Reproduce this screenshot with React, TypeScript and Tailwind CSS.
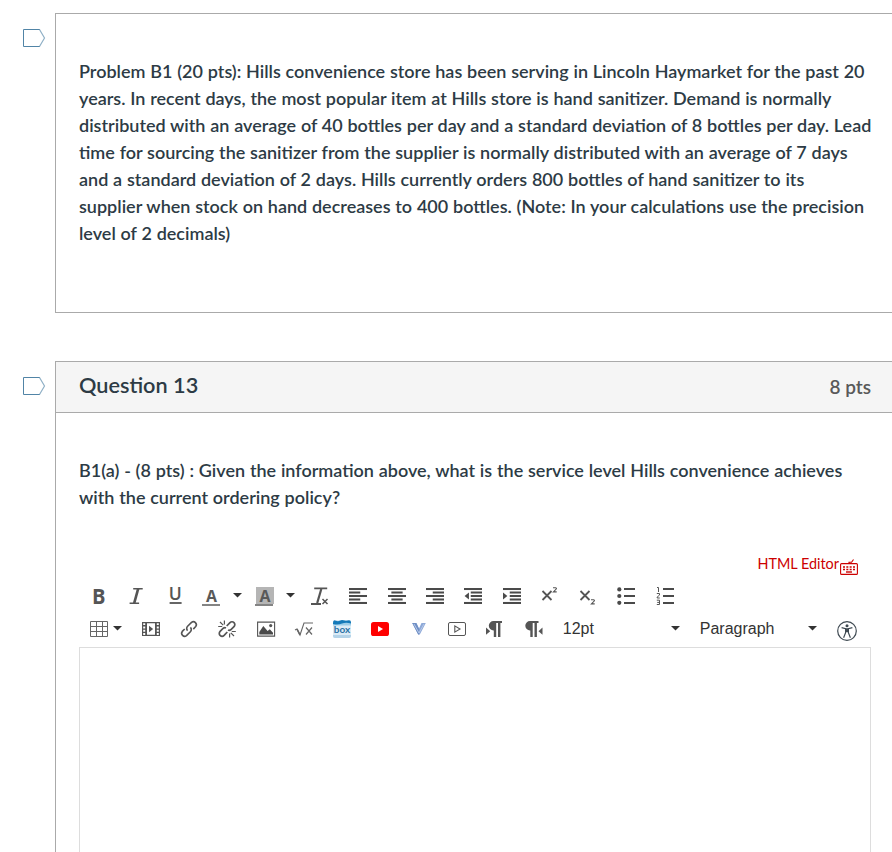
import React from "react";

type IconProps = {
  children: React.ReactNode;
  box?: string;
  className?: string;
};

const Icon = ({ children, box = "0 0 18 18", className = "" }: IconProps) => (
  <svg
    viewBox={box}
    width="18"
    height="18"
    fill="none"
    className={`shrink-0 overflow-visible ${className}`}
  >
    {children}
  </svg>
);

const Cell = ({ children }: { children: React.ReactNode }) => (
  <div className="flex h-[33px] w-[38.3px] shrink-0 items-center justify-center">
    {children}
  </div>
);

const Caret = () => (
  <svg width="9" height="5" viewBox="0 0 9 5" className="shrink-0">
    <path d="M0 0h9L4.5 4.5z" fill="#333" />
  </svg>
);

const Flag = () => (
  <svg width="23" height="19" viewBox="0 0 23 19" fill="none">
    <path d="M17 .5H.5v17H17" stroke="#5184a6" />
    <path d="M16.5 .5l5 8.5-5 8.5" stroke="#8fb0c6" strokeWidth="1.2" />
  </svg>
);

const lines = (widths: number[][]) =>
  widths.map(([x, w], i) => (
    <rect key={i} x={x} y={0.9 + i * 3.1} width={w} height="1.8" fill="#4a4a4a" />
  ));

const aligns = [
  [[0, 16], [0, 10], [0, 16], [0, 10], [0, 16]],
  [[0, 16], [3, 10], [0, 16], [3, 10], [0, 16]],
  [[0, 16], [6, 10], [0, 16], [6, 10], [0, 16]],
  [[0, 16], [6, 10], [6, 10], [6, 10], [0, 16]],
  [[0, 16], [6, 10], [6, 10], [6, 10], [0, 16]],
];

const RowOne = () => (
  <div className="flex h-[33px] items-center">
    <Cell>
      <Icon>
        <text x="3" y="16.6" fontSize="22" fontWeight="700" fontFamily="Open Sans, sans-serif" fill="#555" textLength="13.5" lengthAdjust="spacingAndGlyphs">B</text>
      </Icon>
    </Cell>
    <Cell>
      <Icon>
        <path d="M6.2 1.7h9.5M2.6 16.2h9.5" stroke="#555" strokeWidth="1.4" />
        <path d="M11.2 1.7L7.2 16.2" stroke="#555" strokeWidth="2.6" />
      </Icon>
    </Cell>
    <Cell>
      <Icon>
        <text x="2.8" y="13.2" fontSize="17.5" fontWeight="600" fontFamily="Open Sans, sans-serif" fill="#555">U</text>
        <path d="M3.6 16h12" stroke="#555" strokeWidth="1.8" />
      </Icon>
    </Cell>
    <div className="flex w-[34px] shrink-0 items-center justify-center">
      <Icon>
        <text x="4" y="15" fontSize="15.5" fontWeight="700" fontFamily="Open Sans, sans-serif" fill="#595959" textLength="11" lengthAdjust="spacingAndGlyphs">A</text>
        <path d="M0 18h18" stroke="#777" strokeWidth="1.8" />
      </Icon>
    </div>
    <div className="flex w-[19px] shrink-0 justify-center">
      <Caret />
    </div>
    <div className="flex w-[35px] shrink-0 items-center justify-center">
      <Icon>
        <rect x="1" width="18" height="17" fill="#b5b5b5" />
        <text x="4.5" y="15" fontSize="15.5" fontWeight="700" fontFamily="Open Sans, sans-serif" fill="#595959" textLength="11" lengthAdjust="spacingAndGlyphs">A</text>
        <path d="M0 18h18" stroke="#777" strokeWidth="1.8" />
      </Icon>
    </div>
    <div className="mr-px flex w-[18px] shrink-0 justify-center">
      <Caret />
    </div>
    <Cell>
      <Icon>
        <path d="M3.2 1.4h13M0 17h10" stroke="#555" strokeWidth="1.8" />
        <path d="M10.3 2L6.2 16" stroke="#555" strokeWidth="2.2" />
        <path d="M11.5 12l5 5m0-5l-5 5" stroke="#555" strokeWidth="1.5" />
      </Icon>
    </Cell>
    {aligns.map((a, i) => (
      <Cell key={i}>
        <Icon box="0 0 16 16">
          {lines(a)}
          {i === 3 && <path d="M4.4 4.8v6.4L.5 8z" fill="#4a4a4a" />}
          {i === 4 && <path d="M0 4.8v6.4L3.9 8z" fill="#4a4a4a" />}
        </Icon>
      </Cell>
    ))}
    <Cell>
      <Icon>
        <path d="M1.5 4l9 9m0-9l-9 9" stroke="#555" strokeWidth="1.8" />
        <path d="M12 .8h2.6q1 0 .8 1L12.4 4.9h3.3" stroke="#555" strokeWidth="1.1" />
      </Icon>
    </Cell>
    <Cell>
      <Icon>
        <path d="M1.5 4l9 9m0-9l-9 9" stroke="#555" strokeWidth="1.8" />
        <path d="M12 12.8h2.6q1 0 .8 1l-3 3.1h3.3" stroke="#555" strokeWidth="1.1" />
      </Icon>
    </Cell>
    <Cell>
      <Icon>
        <path d="M7 2h11M7 9h11M7 16h11" stroke="#4a4a4a" strokeWidth="2" />
        <circle cx="2.3" cy="2.4" r="2.1" fill="#4a4a4a" />
        <circle cx="2.3" cy="9" r="2.1" fill="#4a4a4a" />
        <circle cx="2.3" cy="15.8" r="2.1" fill="#4a4a4a" />
      </Icon>
    </Cell>
    <Cell>
      <Icon>
        <path d="M7 2h11M7 9h11M7 16h11" stroke="#4a4a4a" strokeWidth="2" />
        <path d="M1 .5h1.5V5M.8 6.5h2.7v1.6L1.2 10v1h2.6M.8 13.2h2.7v4.3H.8M1.2 15.4h2.3" stroke="#555" />
      </Icon>
    </Cell>
  </div>
);

const pilcrow = "M16 0H7.5a4.6 4.6 0 0 0 0 9.4H7.8V16h2.4V2h1.8v14h2.4V2H16z";

const RowTwo = () => (
  <div className="flex h-[33px] items-center">
    <div className="flex w-[52.5px] shrink-0 items-center pl-[11px]">
      <Icon>
        <path d="M.5 1.5h17v15H.5zM.5 6.5h17M.5 11.5h17M6.5 1.5v15M12.5 1.5v15" stroke="#666" />
      </Icon>
      <div className="pl-[5px]">
        <Caret />
      </div>
    </div>
    <Cell>
      <Icon>
        <path d="M0 2h18v14H0zM5 3.2v11.6h8V3.2zM1.2 3.2v1.9h2V3.2zM1.2 6.5v1.9h2V6.5zM1.2 9.8v1.9h2V9.8zM1.2 13v1.9h2V13zM14.8 3.2v1.9h2V3.2zM14.8 6.5v1.9h2V6.5zM14.8 9.8v1.9h2V9.8zM14.8 13v1.9h2V13z" fill="#555" fillRule="evenodd" />
        <path d="M7 5.8v6.4L11.2 9z" fill="#555" />
      </Icon>
    </Cell>
    <Cell>
      <Icon>
        <g stroke="#555" strokeWidth="1.6">
          <path d="M7.6 10.6a3 3 0 0 1 0-4.3l3.9-3.9a3 3 0 0 1 4.2 4.2l-2.4 2.5" />
          <path d="M10.4 7.4a3 3 0 0 1 0 4.3l-3.9 3.9a3 3 0 0 1-4.2-4.2L4.7 9" />
        </g>
      </Icon>
    </Cell>
    <Cell>
      <Icon>
        <g stroke="#555" strokeWidth="1.7">
          <path d="M8.7 6l3.3-3.4a2.8 2.8 0 0 1 4 0 2.8 2.8 0 0 1 0 4L12.7 9.8Q11.5 10.7 10 10" />
          <path d="M9.3 12l-3.2 3.4a2.8 2.8 0 0 1-4-4L5.3 8.2Q6.5 7.3 8 8" />
        </g>
        <path d="M6.4 .5v4M2 2l3.2 3.2M.2 6.5h4M11.6 17.5v-4M16 16l-3.2-3.2M17.8 11.5h-4" stroke="#555" strokeWidth="1.2" />
      </Icon>
    </Cell>
    <Cell>
      <Icon>
        <path d="M.6 2.1h17v14H.6z" stroke="#555" strokeWidth="1.1" />
        <path d="M2.3 14.5V12l4-6 4.3 5 2.2-1.7 3.2 3.5v1.7z" fill="#4a4a4a" />
        <circle cx="13.7" cy="5.6" r="1.6" fill="#555" />
      </Icon>
    </Cell>
    <Cell>
      <Icon>
        <path d="M0 10l2-1 3 6L9 3h9" stroke="#666" strokeWidth="1.1" />
        <path d="M2 9.2l3 5.6" stroke="#666" strokeWidth="1.6" />
        <path d="M11 7.5l6 7m0-7l-6 7" stroke="#666" strokeWidth="1.2" />
      </Icon>
    </Cell>
    <Cell>
      <Icon>
        <rect y="0" width="18" height="18" rx="2" fill="#dcebf5" />
        <path d="M0 5V3Q0 0 2 .4l3 .8L9 0l4 .8 3-.5q2 0 2 2V5z" fill="#1479b8" />
        <path d="M0 5.5V4Q5 5.2 9 3.6t9 0v1.9z" fill="#9ccde8" />
        <path d="M0 15h18v1q0 2-2 2H2q-2 0-2-2z" fill="#b4d3e8" />
        <text x=".8" y="13.2" fontSize="10" fontWeight="700" fontFamily="Lato, sans-serif" fill="#2a72a5" textLength="16.4" lengthAdjust="spacingAndGlyphs">box</text>
      </Icon>
    </Cell>
    <Cell>
      <Icon>
        <rect y="2" width="18" height="14" rx="2.6" fill="#f00" />
        <path d="M7 6v6l5-3z" fill="#fff" />
      </Icon>
    </Cell>
    <Cell>
      <Icon>
        <path d="M2.2 3h4.3L9 8.5 11.5 3h4.3L9.8 14.5H8.2z" fill="#8ea9d8" />
        <path d="M2.2 3h4l3 6.2v5.3h-1z" fill="#6f8fc4" />
        <path d="M4 4l5 9 5-9" stroke="#b6c8e8" />
      </Icon>
    </Cell>
    <Cell>
      <Icon>
        <rect x=".5" y="2.5" width="17" height="13" rx="1.5" stroke="#555" />
        <path d="M6.8 5.9v6.2L12 9z" stroke="#555" strokeWidth="1.1" />
      </Icon>
    </Cell>
    <Cell>
      <Icon>
        <path d={pilcrow} transform="translate(0 1)" fill="#555" />
        <path d="M0 7.6v7.2l4.2-3.6z" fill="#555" />
      </Icon>
    </Cell>
    <Cell>
      <Icon>
        <path d={pilcrow} transform="translate(-2.5 1)" fill="#555" />
        <path d="M17.5 7.6v7.2l-4-3.6z" fill="#555" />
      </Icon>
    </Cell>
    <div className="flex w-[127px] shrink-0 items-center justify-between pl-[10px] font-['Liberation_Sans',sans-serif] text-base font-normal text-[#333]">
      <span>12pt</span>
      <Caret />
    </div>
    <div className="ml-5 flex w-[117px] shrink-0 items-center justify-between font-['Liberation_Sans',sans-serif] text-base font-normal text-[#333]">
      <span>Paragraph</span>
      <Caret />
    </div>
    <svg width="20" height="20" viewBox="0 0 20 20" fill="none" className="mt-1 ml-5 shrink-0">
      <circle cx="10" cy="10" r="9.3" stroke="#3f4a52" strokeWidth="1.2" />
      <circle cx="10" cy="4.8" r="1.5" fill="#3f4a52" />
      <path d="M4.6 6.7l4 1v4L6.6 16.8M15.4 6.7l-4 1v4l2 5.1" stroke="#3f4a52" strokeWidth="1.2" />
      <path d="M8 7.2h4v4.6L10 11l-2 .8z" fill="#3f4a52" />
    </svg>
  </div>
);

const App = () => {
  return (
    <div className="h-[852px] w-full overflow-hidden bg-white pt-[13px] font-[Lato,sans-serif] text-[18px] leading-[27px] font-semibold text-[#2d3b45]">
      <div className="flex">
        <div className="w-[55px] shrink-0 pt-4 pl-[23px]">
          <Flag />
        </div>
        <div className="h-[300px] grow border border-r-0 border-[#aaa] pt-[44px] pl-[23px] whitespace-nowrap [word-spacing:0.3px]">
          Problem B1 (20 pts): Hills convenience store has been serving in Lincoln Haymarket for the past 20
          <br />
          years. In recent days, the most popular item at Hills store is hand sanitizer. Demand is normally
          <br />
          distributed with an average of 40 bottles per day and a standard deviation of 8 bottles per day. Lead
          <br />
          time for sourcing the sanitizer from the supplier is normally distributed with an average of 7 days
          <br />
          and a standard deviation of 2 days. Hills currently orders 800 bottles of hand sanitizer to its
          <br />
          supplier when stock on hand decreases to 400 bottles. (Note: In your calculations use the precision
          <br />
          level of 2 decimals)
        </div>
      </div>
      <div className="mt-12 flex">
        <div className="w-[55px] shrink-0 pt-4 pl-[23px]">
          <Flag />
        </div>
        <div className="h-[500px] grow border border-r-0 border-[#aaa]">
          <div className="flex h-[51px] items-center justify-between border-b border-[#aaa] bg-[#f5f5f5] pr-[21px] pb-px pl-[23px]">
            <h2 className="-mt-[3px] text-[21.7px]">Question 13</h2>
            <span className="text-[19px] text-[#595959]">8 pts</span>
          </div>
          <div className="mr-[21px] ml-[23px] pt-[44px]">
            <p className="whitespace-nowrap [word-spacing:0.3px]">
              B1(a) - (8 pts) : Given the information above, what is the service level Hills convenience achieves
              <br />
              with the current ordering policy?
            </p>
            <div className="mt-[41px] flex h-[24px] justify-end pr-[13px] text-[14.4px] leading-[24px] font-normal text-[#c00]">
              <span className="pr-px">HTML Editor</span>
              <svg width="18" height="16" viewBox="0 0 18 16" fill="none" className="mt-[7px] shrink-0">
                <rect x=".6" y="4.6" width="16.8" height="10.8" rx="1" stroke="#c00" strokeWidth="1.1" />
                <path d="M9 4.5V3.2h2.6L13.5.5" stroke="#c00" strokeWidth="1.1" />
                <path d="M3 8h12M3 10.5h12" stroke="#c00" strokeWidth="1.6" strokeDasharray="2 1.33" />
                <path d="M6 13h6" stroke="#c00" strokeWidth="1.4" />
              </svg>
            </div>
            <div className="mt-[3px]">
              <RowOne />
              <RowTwo />
            </div>
            <div className="mt-[2px] h-[300px] border border-[#ddd]"></div>
          </div>
        </div>
      </div>
    </div>
  );
};

export default App;
